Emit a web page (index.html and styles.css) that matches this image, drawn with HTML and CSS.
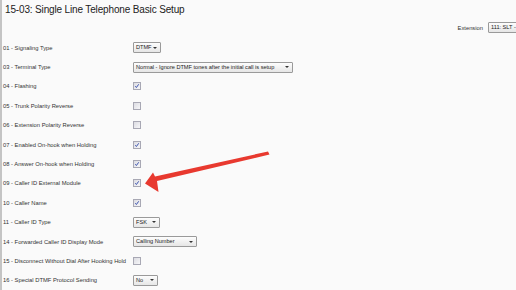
FILE: index.html
```html
<!DOCTYPE html>
<html lang="en">
<head>
    <meta charset="UTF-8">
    <title>15-03: Single Line Telephone Basic Setup</title>
    <link rel="stylesheet" href="styles.css">
</head>
<body>
    <div class="page">
        <h1>15-03: Single Line Telephone Basic Setup</h1>
        <div class="ext">
            <span class="ext-label">Extension</span>
            <span class="select ext-select">111: SLT -</span>
        </div>

        <div class="rows">
            <div class="row"><span class="label">01 - Signaling Type</span>
                <span class="select w-dtmf">DTMF<i class="caret"></i></span></div>
            <div class="row"><span class="label">03 - Terminal Type</span>
                <span class="select w-term">Normal - Ignore DTMF tones after the initial call is setup<i class="caret"></i></span></div>
            <div class="row"><span class="label">04 - Flashing</span>
                <span class="check"><svg viewBox="0 0 6 6"><path d="M1.3 3.2 L2.4 4.5 L4.7 1.3"/></svg></span></div>
            <div class="row"><span class="label">05 - Trunk Polarity Reverse</span>
                <span class="check"></span></div>
            <div class="row"><span class="label">06 - Extension Polarity Reverse</span>
                <span class="check"></span></div>
            <div class="row"><span class="label">07 - Enabled On-hook when Holding</span>
                <span class="check"><svg viewBox="0 0 6 6"><path d="M1.3 3.2 L2.4 4.5 L4.7 1.3"/></svg></span></div>
            <div class="row"><span class="label">08 - Answer On-hook when Holding</span>
                <span class="check"><svg viewBox="0 0 6 6"><path d="M1.3 3.2 L2.4 4.5 L4.7 1.3"/></svg></span></div>
            <div class="row"><span class="label">09 - Caller ID External Module</span>
                <span class="check"><svg viewBox="0 0 6 6"><path d="M1.3 3.2 L2.4 4.5 L4.7 1.3"/></svg></span></div>
            <div class="row"><span class="label">10 - Caller Name</span>
                <span class="check"><svg viewBox="0 0 6 6"><path d="M1.3 3.2 L2.4 4.5 L4.7 1.3"/></svg></span></div>
            <div class="row"><span class="label">11 - Caller ID Type</span>
                <span class="select w-fsk">FSK<i class="caret"></i></span></div>
            <div class="row"><span class="label">14 - Forwarded Caller ID Display Mode</span>
                <span class="select w-calling">Calling Number<i class="caret"></i></span></div>
            <div class="row"><span class="label">15 - Disconnect Without Dial After Hooking Hold</span>
                <span class="check"></span></div>
            <div class="row"><span class="label">16 - Special DTMF Protocol Sending</span>
                <span class="select w-no">No<i class="caret"></i></span></div>
        </div>

        <!-- annotation arrow drawn over the form -->
        <svg class="arrow" width="516" height="290" viewBox="0 0 516 290">
            <polygon fill="#e8392f" points="268,151.5 269.5,154.5 157,181 158.5,192 145,183.5 153,172.5 155,176.5"/>
        </svg>
    </div>
</body>
</html>
```

FILE: styles.css
```css
body {
    margin: 0;
    background: #fafafa;
    font-family: "Liberation Sans", Arial, sans-serif;
    color: #222;
}

.page {
    position: relative;
    height: 290px;
    border-left: 2px solid #c4c4c4;
    box-sizing: border-box;
    overflow: hidden;
}

h1 {
    margin: 0;
    padding: 4px 0 0 3px;
    font-size: 10px;
    letter-spacing: -0.15px;
    font-weight: normal;
    color: #222;
    white-space: nowrap;
}

.ext {
    display: flex;
    justify-content: flex-end;
    align-items: center;
    gap: 5px;
    margin-top: 7px;
    margin-right: -8px;
}

.ext-label {
    font-size: 5.8px;
    color: #333;
}

.ext-select {
    width: 36px;
    height: 12px;
    line-height: 10px;
}

.rows {
    margin-top: 5px;
}

.row {
    display: flex;
    align-items: center;
    height: 19.4px;
}

.label {
    width: 130px;
    padding-left: 1px;
    font-size: 5.8px;
    color: #333;
    white-space: nowrap;
}

.select {
    position: relative;
    display: inline-block;
    box-sizing: border-box;
    height: 11px;
    line-height: 9px;
    padding-left: 2px;
    border: 1px solid #9a9a9a;
    border-radius: 1px;
    background: linear-gradient(#fdfdfd, #e6e6e6);
    font-size: 5.6px;
    color: #222;
    white-space: nowrap;
    overflow: hidden;
}

.caret {
    position: absolute;
    right: 3px;
    top: 3.5px;
    border-left: 2px solid transparent;
    border-right: 2px solid transparent;
    border-top: 2px solid #333;
}

.w-dtmf { width: 28px; }
.w-term { width: 160px; }
.w-fsk { width: 27px; }
.w-calling { width: 64px; }
.w-no { width: 25px; }

.check {
    display: inline-flex;
    align-items: center;
    justify-content: center;
    box-sizing: border-box;
    width: 8px;
    height: 8px;
    border: 1px solid #a8a8b4;
    background: linear-gradient(135deg, #dcdce2, #f6f6f8);
}

.check svg {
    width: 6px;
    height: 6px;
}

.check path {
    fill: none;
    stroke: #2b45a8;
    stroke-width: 0.9;
}

.arrow {
    position: absolute;
    left: -2px;
    top: 0;
    pointer-events: none;
}
```
